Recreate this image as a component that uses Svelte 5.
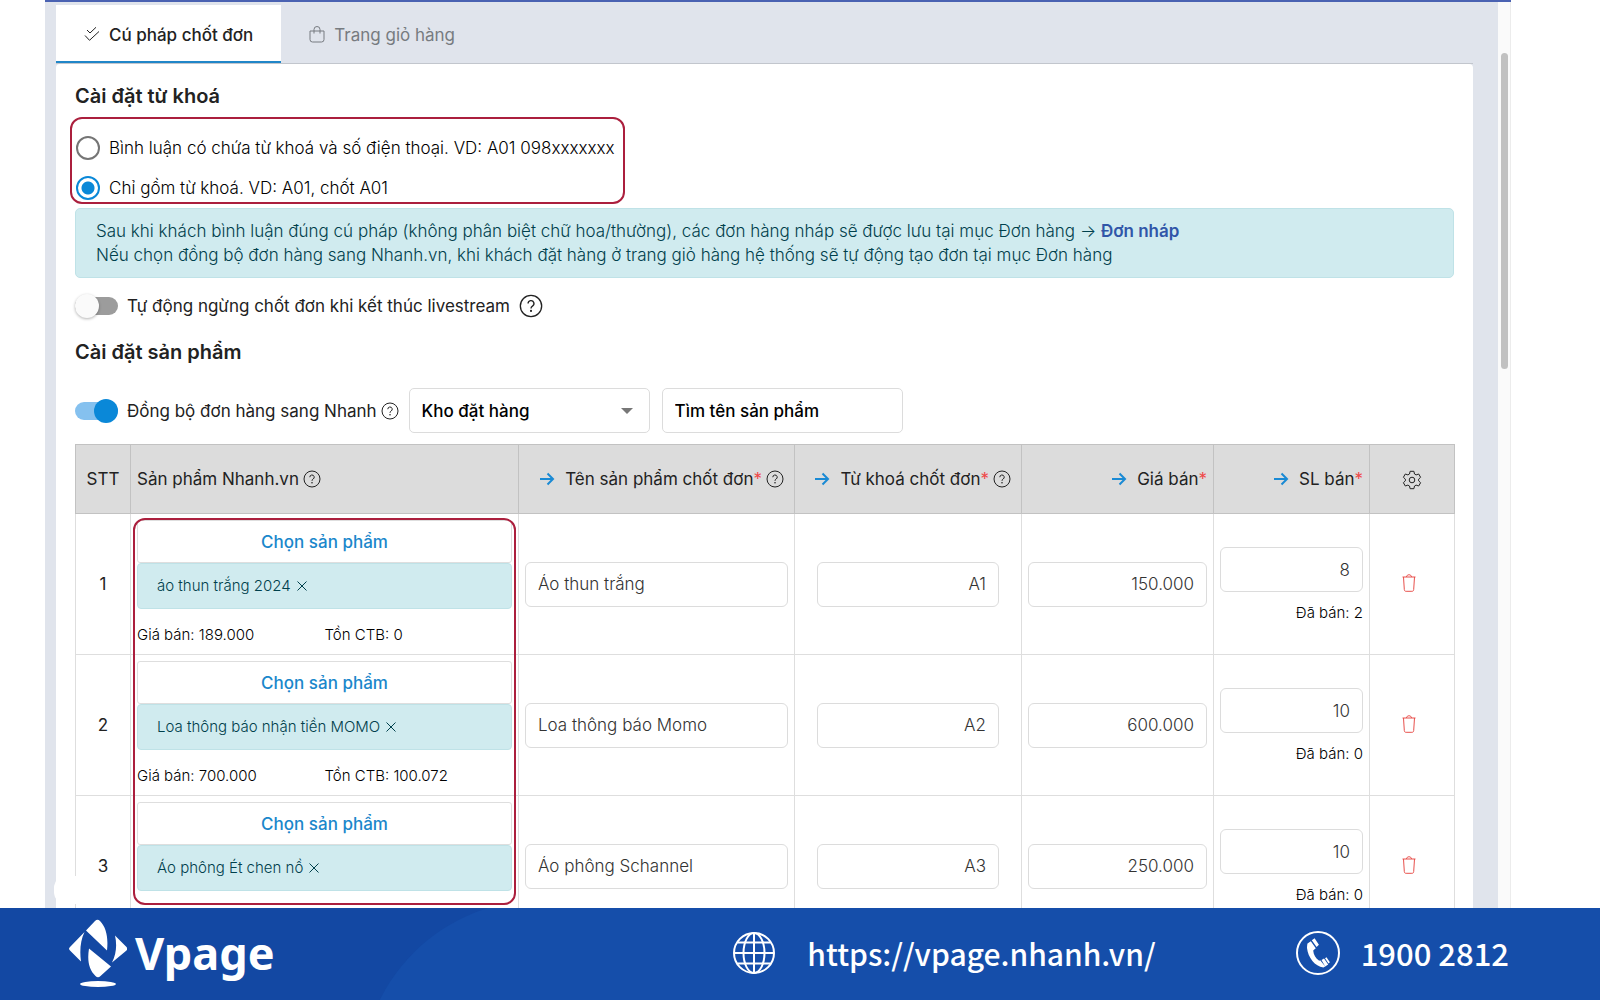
<script>
  let activeTab = $state('syntax');
  let mode = $state('keyword');
  let autoStop = $state(false);
  let sync = $state(true);

  const columns = [
    { label: 'Tên sản phẩm chốt đơn', help: true },
    { label: 'Từ khoá chốt đơn', help: true },
    { label: 'Giá bán', help: false },
    { label: 'SL bán', help: false }
  ];

  let rows = $state([
    { tag: 'áo thun trắng 2024', info: ['Giá bán: 189.000', 'Tồn CTB: 0'], name: 'Áo thun trắng', key: 'A1', price: '150.000', qty: '8', sold: 2 },
    { tag: 'Loa thông báo nhận tiền MOMO', info: ['Giá bán: 700.000', 'Tồn CTB: 100.072'], name: 'Loa thông báo Momo', key: 'A2', price: '600.000', qty: '10', sold: 0 },
    { tag: 'Áo phông Ét chen nồ', info: [], name: 'Áo phông Schannel', key: 'A3', price: '250.000', qty: '10', sold: 0 }
  ]);
</script>

{#snippet help(big)}
  <svg class="help" class:big viewBox="0 0 18 18" aria-hidden="true">
    <circle cx="9" cy="9" r="8" />
    <path d="M6.8 7.2a2.2 2.2 0 1 1 3.3 1.9c-.8.5-1.1.8-1.1 1.7" />
    <circle class="dot" cx="9" cy="12.7" r=".8" />
  </svg>
{/snippet}

<div class="shell">
  <main>
    <div class="work">
      <nav class="tabs">
        <button class:active={activeTab === 'syntax'} onclick={() => (activeTab = 'syntax')}>
          <svg viewBox="0 0 16 16" aria-hidden="true"><path d="M3 3.5l3 3L12 .8M1 9l4.500 4.800L15 5" /></svg>
          Cú pháp chốt đơn
        </button>
        <button class:active={activeTab === 'cart'} onclick={() => (activeTab = 'cart')}>
          <svg viewBox="0 0 16 17" aria-hidden="true"><path d="M1 5h14v8.500a2.500 2.500 0 0 1-2.500 2.500h-9A2.500 2.500 0 0 1 1 13.500zM5 7.500V3.500a3 3 0 0 1 6 0v4" /></svg>
          Trang giỏ hàng
        </button>
      </nav>

      <section class="panel">
        <h2>Cài đặt từ khoá</h2>
        <div class="modes" role="radiogroup" aria-label="Cài đặt từ khoá">
          <label><input type="radio" name="mode" value="phone" bind:group={mode} />Bình luận có chứa từ khoá và số điện thoại. VD: A01 098xxxxxxx</label>
          <label><input type="radio" name="mode" value="keyword" bind:group={mode} />Chỉ gồm từ khoá. VD: A01, chốt A01</label>
        </div>

        <p class="notice">
          Sau khi khách bình luận đúng cú pháp (không phân biệt chữ hoa/thường), các đơn hàng nháp sẽ được lưu tại mục Đơn hàng → <a href="#drafts">Đơn nháp</a><br />
          Nếu chọn đồng bộ đơn hàng sang Nhanh.vn, khi khách đặt hàng ở trang giỏ hàng hệ thống sẽ tự động tạo đơn tại mục Đơn hàng
        </p>

        <label class="switch auto">
          <input type="checkbox" bind:checked={autoStop} />
          <span>Tự động ngừng chốt đơn khi kết thúc livestream</span>
          {@render help(true)}
        </label>

        <h2>Cài đặt sản phẩm</h2>

        <div class="filters">
          <label class="switch">
            <input type="checkbox" bind:checked={sync} />
            <span>Đồng bộ đơn hàng sang Nhanh</span>
            {@render help(false)}
          </label>
          <div class="select">
            <select aria-label="Kho đặt hàng"><option>Kho đặt hàng</option></select>
            <svg viewBox="0 0 12 6" aria-hidden="true"><path d="M0 0h12L6 6z" /></svg>
          </div>
          <input class="search" type="text" placeholder="Tìm tên sản phẩm" aria-label="Tìm tên sản phẩm" />
        </div>

        <div class="table-wrap">
          <table>
            <colgroup>
              <col class="c-no" /><col class="c-product" /><col class="c-name" /><col class="c-key" />
              <col class="c-price" /><col class="c-qty" /><col class="c-act" />
            </colgroup>
            <thead>
              <tr>
                <th class="center">STT</th>
                <th><div class="head start">Sản phẩm Nhanh.vn {@render help(false)}</div></th>
                {#each columns as col}
                  <th>
                    <div class="head" class:wide={col.help}>
                      <svg class="arrow" viewBox="0 0 16 14" aria-hidden="true"><path d="M1 7h13M8.500 1.500L14 7l-5.500 5.500" /></svg>
                      <span>{col.label}<i>*</i></span>
                      {#if col.help}{@render help(false)}{/if}
                    </div>
                  </th>
                {/each}
                <th class="center">
                  <button class="icon" aria-label="Cài đặt cột">
                    <svg class="gear" viewBox="0 0 20 20" aria-hidden="true">
                      <path d="M8.100 1.300h3.800l.6 2.700 1.600.9 2.600-.9 1.900 3.300-2 1.900v1.600l2 1.900-1.900 3.300-2.600-.9-1.600.9-.6 2.700H8.100L7.500 16l-1.600-.9-2.600.9-1.900-3.300 2-1.900V9.200l-2-1.900L3.300 4l2.600.9L7.500 4z" />
                      <circle cx="10" cy="10" r="2.800" />
                    </svg>
                  </button>
                </th>
              </tr>
            </thead>
            <tbody>
              {#each rows as row, i}
                <tr>
                  <td class="center">{i + 1}</td>
                  <td class="product">
                    <button class="choose">Chọn sản phẩm</button>
                    <div class="tag">
                      {row.tag}
                      <button class="icon" aria-label="Bỏ {row.tag}">
                        <svg class="cross" viewBox="0 0 10 10" aria-hidden="true"><path d="M.5.5l9 9M9.500.5l-9 9" /></svg>
                      </button>
                    </div>
                    <div class="info">
                      {#each row.info as text}<span>{text}</span>{/each}
                    </div>
                  </td>
                  <td><input type="text" bind:value={row.name} aria-label="Tên sản phẩm chốt đơn" /></td>
                  <td class="key"><input type="text" bind:value={row.key} aria-label="Từ khoá chốt đơn" /></td>
                  <td class="num"><input type="text" bind:value={row.price} aria-label="Giá bán" /></td>
                  <td class="num qty">
                    <input type="text" bind:value={row.qty} aria-label="SL bán" />
                    <div class="sold">Đã bán: {row.sold}</div>
                  </td>
                  <td class="center remove">
                    <button class="icon" aria-label="Xoá dòng">
                      <svg class="trash" viewBox="0 0 14 18" aria-hidden="true"><path d="M.5 3h13M4.500 3c0-3 5-3 5 0M1.500 3l.8 12.500c.1 1.300.6 1.800 1.800 1.800h5.800c1.200 0 1.700-.5 1.800-1.800L12.500 3" /></svg>
                    </button>
                  </td>
                </tr>
              {/each}
            </tbody>
          </table>
          <div class="highlight"></div>
        </div>
      </section>
    </div>
    <div class="track"><div class="thumb"></div></div>
    <div class="blob"></div>
  </main>

  <footer>
    <div class="glow"></div>
    <div class="brand">
      <svg viewBox="0 0 58 68" aria-hidden="true">
        <path d="M17 11.500L26 2q2.500-2.500 5 0C37 8 39.500 18 38 31.500zM20 29.500L42 47.500 31.500 57q-2.500 2.500-5 0C20 51 18 42 20 29.500zM15.500 13C11.500 21 10.500 32 12 42.500L1 31.500q-2-1.700 0-3.500zM46 16.500c2 9 1.500 18-3 27L57.500 31.500q1.500-1.700 0-3.500z" />
        <ellipse cx="29" cy="65" rx="18" ry="3" />
      </svg>
      <span>Vpage</span>
    </div>
    <a class="site" href="https://vpage.nhanh.vn/">
      <svg viewBox="0 0 42 42" aria-hidden="true">
        <circle cx="21" cy="21" r="20" />
        <ellipse cx="21" cy="21" rx="10.500" ry="20" />
        <path d="M21 1v40M1 21h40M4.500 10.500h33M4.500 31.500h33" />
      </svg>
      https://vpage.nhanh.vn/
    </a>
    <a class="phone" href="tel:19002812">
      <svg viewBox="0 0 44 44" aria-hidden="true">
        <circle cx="22" cy="22" r="21" />
        <path class="fill" d="M11.500 12.500l3.300-2.300 5 7-2.600 2.300c.3 4 2.400 7.700 6 10.300l1-.6 5 6.300-1.800 1c-8.400-1-15.400-10-16.400-19.500.1-2 .2-3.500.5-4.500zM15.800 9.200l2.800-1.900 4.300 6.500-2.300 2.300zM25.500 29l2.500-1.500 4.200 6-3 2zM29 27.200l1.500-.9 3.400 5-1.400 1.200z" />
      </svg>
      1900 2812
    </a>
  </footer>
</div>

<style>
  :global(body) { margin: 0; background: #fff; }
  * { box-sizing: border-box; }
  .shell {
    height: 100vh;
    display: flex;
    flex-direction: column;
    overflow: hidden;
    font: 400 17px/24px Inter, "Noto Sans", sans-serif;
    color: #222;
  }
  button, input, select { font: inherit; color: inherit; }
  button { background: none; border: 0; padding: 0; cursor: pointer; }
  svg { fill: none; stroke: currentColor; flex: none; }

  main {
    position: relative;
    flex: 1;
    min-height: 0;
    margin: 0 89px 0 45px;
    display: flex;
    border-top: 2px solid #4a62b2;
    overflow: hidden;
  }
  .work { flex: 1; min-width: 0; background: #e0e4ec; padding: 3px 25px 0 11px; }
  .track { width: 13px; background: #fafafa; border-right: 1px solid #ececec; padding: 51px 2px 0 3px; }
  .thumb { height: 316px; border-radius: 4px; background: #c1c1c1; }
  .blob { position: absolute; left: 9px; bottom: 4px; width: 44px; height: 28px; border-radius: 12px; background: #fff; }

  .tabs { display: flex; border-bottom: 1px solid #c2c6cd; }
  .tabs button {
    display: flex;
    align-items: center;
    gap: 9px;
    height: 58px;
    padding: 3px 28px 0;
    color: #777b80;
    font-weight: 400;
    border-bottom: 2px solid transparent;
  }
  .tabs button.active { background: #fff; color: #222; border-color: #2086c8; font-weight: 500; }
  .tabs svg { width: 16px; height: 17px; stroke-width: 1; }

  .panel { background: #fff; border-radius: 4px 4px 0 0; padding: 19px 19px 0; min-height: 100%; }
  h2 { margin: 0; font-size: 20px; line-height: 26px; font-weight: 600; }

  .modes {
    width: fit-content;
    margin: 8px 0 4px -5px;
    padding: 17px 8px 2px 4px;
    border: 2px solid #ab1f3d;
    border-radius: 12px;
    display: grid;
    gap: 16px;
    font-weight: 300;
    color: #000;
  }
  .modes label { display: flex; align-items: center; gap: 9px; }
  .modes input {
    appearance: none;
    width: 24px;
    height: 24px;
    margin: 0;
    border: 2px solid #757575;
    border-radius: 50%;
  }
  .modes input:checked { border-color: #0a88d8; background: radial-gradient(circle, #0a88d8 6px, transparent 7px); }

  .notice {
    margin: 0;
    padding: 10px 20px;
    background: #d0ebef;
    border: 1px solid #bfe2e7;
    border-radius: 5px;
    color: #00404c;
    font-weight: 300;
  }
  .notice a { color: #3056a8; font-weight: 600; text-decoration: none; }

  .switch { display: flex; align-items: center; gap: 9px; width: fit-content; }
  .auto { margin: 16px 0 21px; }
  .switch input {
    appearance: none;
    position: relative;
    width: 43px;
    height: 18px;
    margin: 0;
    border-radius: 9px;
    background: #9c9c9c;
  }
  .switch input::after {
    content: "";
    position: absolute;
    left: 0;
    top: -3px;
    width: 24px;
    height: 24px;
    border-radius: 50%;
    background: #fafafa;
    box-shadow: 0 1px 3px rgba(0, 0, 0, 0.3);
  }
  .switch input:checked { background: #85c1ef; }
  .switch input:checked::after { left: auto; right: 0; background: #0a88d8; box-shadow: none; }
  .help { width: 18px; height: 18px; stroke-width: 1; }
  .help.big { width: 24px; height: 24px; }
  .help .dot { fill: currentColor; stroke: none; }
  .switch .help:not(.big) { margin-left: -5px; }

  .filters { display: flex; align-items: center; gap: 12px; margin-top: 23px; }
  .filters > .switch { margin-right: -2px; }
  .select { display: grid; width: 241px; align-items: center; }
  .select select, .select svg { grid-area: 1 / 1; }
  .select svg { justify-self: end; margin-right: 17px; width: 12px; height: 6px; fill: #777; stroke: none; pointer-events: none; }
  select, .search { appearance: none; width: 241px; height: 45px; padding: 0 12px; border: 1px solid #dcdcdc; border-radius: 5px; background: #fff; color: #000; font-weight: 500; }
  .search::placeholder { color: #000; opacity: 1; }

  .table-wrap { position: relative; margin-top: 11px; }
  .highlight { position: absolute; left: 58px; top: 74px; width: 28%; max-width: 383px; height: 387px; border: 2px solid #ab1f3d; border-radius: 12px; pointer-events: none; }
  table { width: 100%; table-layout: fixed; border-collapse: collapse; }
  .c-no { width: 55px; }
  .c-product { width: 388px; }
  .c-name { width: 276px; }
  .c-key { width: 227px; }
  .c-price { width: 192px; }
  .c-qty { width: 156px; }
  .c-act { width: 85px; }
  th { height: 69px; padding: 0 6px; background: #dcdcdc; border: 1px solid #c2c2c2; font-weight: inherit; text-align: left; }
  td { height: 141px; padding: 0 6px; border: 1px solid #dedede; }
  .center { text-align: center; }
  .head { display: flex; align-items: center; justify-content: flex-end; gap: 4px; white-space: nowrap; }
  .head.start { justify-content: flex-start; }
  .head.wide { padding-right: 4px; }
  .head i { font-style: normal; color: #f04848; }
  .arrow { width: 16px; height: 14px; margin-right: 6px; color: #1a8ad4; stroke-width: 2; }
  .gear { width: 20px; height: 20px; stroke-width: 1; stroke-linejoin: round; }
  .icon { display: inline-flex; vertical-align: middle; }
  .remove { padding: 0 12px 4px 6px; }
  .trash { width: 14px; height: 18px; color: #e8504c; stroke-width: 1; }

  .product { vertical-align: top; padding-top: 6px; }
  .choose { display: block; width: 100%; height: 43px; border: 1px solid #dedede; border-radius: 3px; color: #1a87cb; font-weight: 500; }
  .tag {
    display: flex;
    align-items: center;
    gap: 6px;
    height: 46px;
    padding: 0 19px;
    background: #d0ebef;
    border: 1px solid #bfe2e7;
    border-radius: 4px;
    color: #00404c;
  }
  .tag, .info, .sold { font-size: 15px; font-weight: 300; }
  .info, .sold { color: #000; }
  .cross { width: 10px; height: 10px; stroke-width: 1; }
  .info { display: grid; grid-template-columns: 1fr 1fr; margin-top: 14px; }
  td input { display: block; width: 100%; height: 45px; padding: 0 12px; border: 1px solid #dcdcdc; border-radius: 6px; background: #fff; color: #333; font-weight: 300; }
  .key { padding: 0 22px; }
  .key input, .num input { text-align: right; }
  .qty { padding-top: 4px; }
  .sold { margin-top: 9px; text-align: right; }

  footer {
    position: relative;
    overflow: hidden;
    flex: none;
    height: 92px;
    padding: 0 91px 3px 69px;
    display: flex;
    align-items: center;
    gap: 140px;
    background: #1348a3;
    color: #fff;
  }
  .glow { position: absolute; left: 361px; right: -200px; top: -8px; height: 900px; border-radius: 180px 0 0 0; background: #154eaa; }
  .brand, footer a { position: relative; display: flex; align-items: center; }
  .brand { flex: 1; gap: 8px; font: 700 45px/60px "Noto Sans", sans-serif; }
  .brand svg { width: 58px; height: 68px; fill: #fff; stroke: none; }
  footer a { color: #fff; text-decoration: none; white-space: nowrap; font: 500 30px/44px "Noto Sans CJK SC", sans-serif; }
  .site { gap: 32px; }
  .site svg { width: 42px; height: 42px; stroke-width: 2; }
  footer .phone { gap: 21px; font-size: 31px; }
  .phone svg { width: 44px; height: 44px; stroke-width: 2; }
  .phone .fill { fill: #fff; stroke: none; }
</style>
